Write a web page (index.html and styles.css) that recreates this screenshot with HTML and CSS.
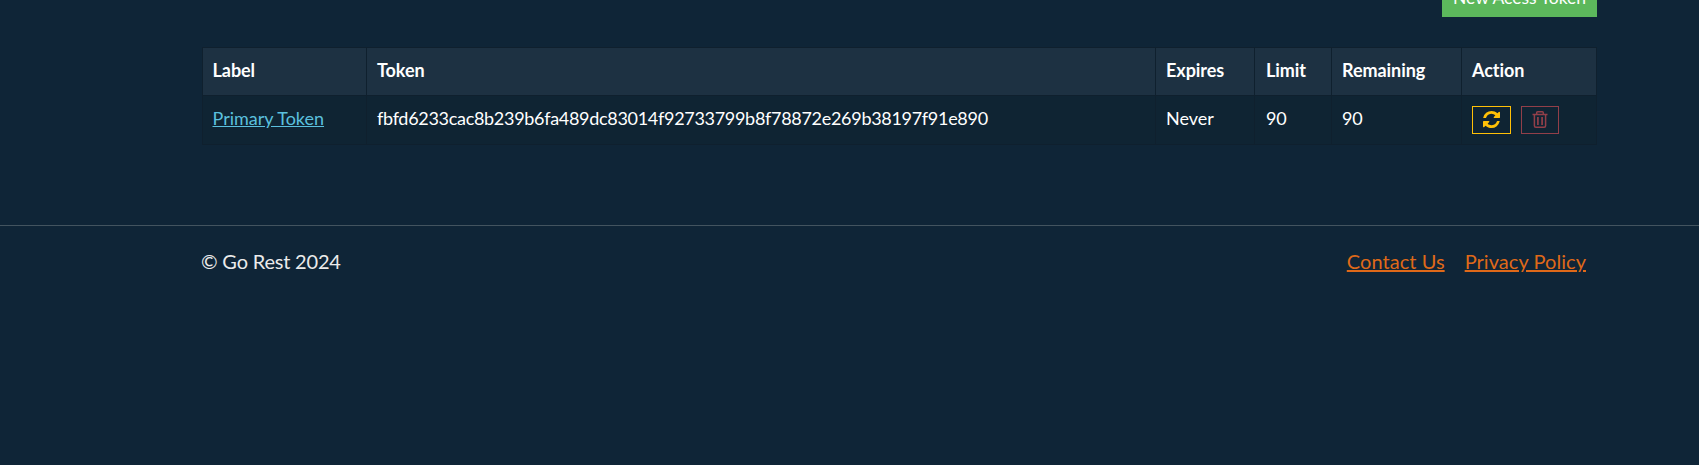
FILE: index.html
```
<!DOCTYPE html>
<html lang="en">
<head>
<meta charset="utf-8">
<title>Access Tokens</title>
<link rel="stylesheet" href="styles.css">
</head>
<body>
<main class="container">
  <div class="toolbar"><a class="btn-new">New Acess Token</a></div>
  <table class="tokens">
    <colgroup><col class="c-label"><col class="c-token"><col class="c-expires"><col class="c-limit"><col class="c-remaining"><col class="c-action"></colgroup>
    <thead>
      <tr><th>Label</th><th>Token</th><th>Expires</th><th>Limit</th><th>Remaining</th><th>Action</th></tr>
    </thead>
    <tbody>
      <tr>
        <td><a class="token-link" href="#">Primary Token</a></td>
        <td class="num">fbfd6233cac8b239b6fa489dc83014f92733799b8f78872e269b38197f91e890</td>
        <td>Never</td><td class="num">90</td><td class="num">90</td>
        <td class="action-cell">
          <div class="actions">
            <button class="btn btn-refresh" aria-label="Refresh"><svg width="17" height="17" viewBox="0 0 1536 1536"><path fill="currentColor" d="M1511 928q0 5-1 7-64 268-268 434.5T764 1536q-146 0-282.5-55T238 1324l-129 129q-19 19-45 19t-45-19-19-45V960q0-26 19-45t45-19h448q26 0 45 19t19 45-19 45l-137 137q71 66 161 102t187 36q134 0 250-65t186-179q11-17 53-117 8-23 30-23h192q13 0 22.500 9.500t9.500 22.500zm25-800v448q0 26-19 45t-45 19h-448q-26 0-45-19t-19-45 19-45l138-138Q969 256 768 256q-134 0-250 65T332 500q-11 17-53 117-8 23-30 23H50q-13 0-22.500-9.500T18 608v-7q65-268 270-434.500T768 0q146 0 284 55.500T1297 212l130-129q19-19 45-19t45 19 19 45z"/></svg></button>
            <button class="btn btn-delete" disabled aria-label="Delete"><svg width="16" height="17" viewBox="0 0 16 17" fill="none" stroke="currentColor"><path stroke-width="1.500" d="M.5 3.400h15M4.700 3V1.700q0-.9.900-.9h4.800q.9 0 .9.900V3M2.400 3.500v11.200q0 1.500 1.500 1.500h8.200q1.500 0 1.500-1.500V3.500"/><path stroke-width="1.700" d="M5.900 6v8M10.100 6v8"/></svg></button>
          </div>
        </td>
      </tr>
    </tbody>
  </table>
</main>
<footer class="footer">
  <div class="container footer-row">
    <span class="copyright">© Go Rest 2024</span>
    <nav class="footer-links"><a href="#">Contact Us</a><a href="#">Privacy Policy</a></nav>
  </div>
</footer>
</body>
</html>
```
FILE: styles.css
```
* { box-sizing: border-box; }
html { background: #0f2537; }
body {
  margin: 0;
  height: 465px;
  overflow: hidden;
  background: #0f2537;
  color: #ebebeb;
  font: 18px/27px Lato, sans-serif;
}
.container { width: 1395px; margin-left: 202px; }
.toolbar { display: flex; justify-content: flex-end; height: 17px; align-items: flex-end; }
.btn-new {
  width: 155px;
  height: 41px;
  flex: none;
  background: #5cb85c;
  color: #fff;
  font-size: 17.5px;
  line-height: 27px;
  padding-top: 8px;
  text-align: center;
}
.tokens {
  width: 1395px;
  margin-top: 30px;
  table-layout: fixed;
  border-collapse: separate;
  border-spacing: 0;
  border-top: 1px solid #0f202e;
  border-left: 1px solid #0f202e;
  color: #fff;
}
.c-label { width: 164px; }
.c-token { width: 789px; }
.c-expires { width: 99px; }
.c-limit { width: 77px; }
.c-remaining { width: 130px; }
.c-action { width: 135px; }
.tokens th, .tokens td {
  padding: 0 10px;
  text-align: left;
  border-right: 1px solid #0f202e;
  border-bottom: 1px solid #0f202e;
  white-space: nowrap;
}
.tokens th { height: 48px; padding-bottom: 2px; background: #1d3142; font-weight: 700; letter-spacing: -0.05px; }
.tokens td { height: 49px; padding-bottom: 4px; background: #0f2433; }
.tokens td.action-cell { padding-bottom: 0; }
.tokens th:first-child, .tokens td:first-child { padding-left: 9.5px; }
.tokens th:nth-child(4), .tokens td:nth-child(4) { padding-left: 11px; }
.tokens td.num { letter-spacing: -0.3px; }
.token-link { color: #5bc0de; }
.actions { display: flex; gap: 10px; }
.btn {
  display: flex;
  align-items: center;
  justify-content: center;
  height: 28px;
  padding: 0;
  border: 1px solid currentColor;
  background: none;
}
.btn-refresh { width: 39px; color: #ffc107; padding-bottom: 1px; }
.btn-delete { width: 38px; color: #923f49; padding-bottom: 1px; }
.footer { margin-top: 80px; border-top: 1px solid #43545f; font-size: 20px; line-height: 30px; }
.footer-row { display: flex; justify-content: space-between; padding: 20px 11px 0 0; }
.copyright { margin-left: -1px; letter-spacing: -0.2px; }
.footer-links { display: flex; gap: 20px; letter-spacing: 0.05px; }
.footer-links a { color: #df6919; text-decoration-thickness: 2px; }
```
